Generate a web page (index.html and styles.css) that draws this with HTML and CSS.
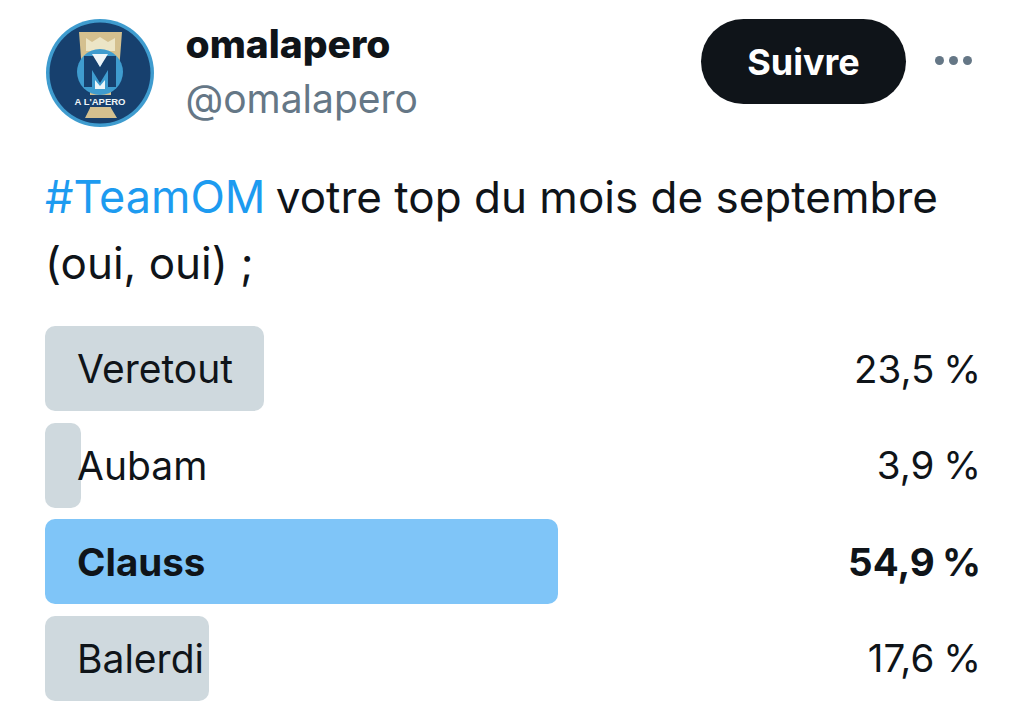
FILE: index.html
```html
<!DOCTYPE html>
<html lang="en">
  <head>
    <title>omalapero</title>
    <meta charset="UTF-8">
    <link rel="stylesheet" href="styles.css">
  </head>
  <body>
    <article class="tweet">
      <header class="tweet-head">
        <svg class="avatar" viewBox="0 0 110 110" aria-hidden="true">
          <circle cx="55" cy="55" r="54" fill="#3f9ccf"/>
          <circle cx="55" cy="55" r="50.5" fill="#17406e"/>
          <path d="M34 14 H77 L75 40 Q73 60 66 74 L66 90 L72 100 H40 L45 90 L45 74 Q37 60 36 40 Z" fill="#d4c08f"/>
          <path d="M41 20 L47 24 L55 19 L63 24 L70 20 V33 H41 Z" fill="#ece5c6"/>
          <circle cx="55" cy="54" r="23" fill="#3f9ccf"/>
          <path d="M39 69 V38 H49 L55 49 L61 38 H71 V69 H63 V52 L55 65 L47 52 V69 Z" fill="#17406e"/>
          <path d="M47 36 H63 L55 49 Z" fill="#eef5f8"/>
          <path d="M50 62 L55 68 L60 62 V71 H50 Z" fill="#eef5f8"/>
          <rect x="25" y="77" width="60" height="12" fill="#17406e"/>
          <text class="avatar-text" x="55" y="87" text-anchor="middle">A L'APERO</text>
        </svg>
        <div class="names">
          <span class="display-name">omalapero</span>
          <span class="handle">@omalapero</span>
        </div>
        <button class="follow-btn">Suivre</button>
        <div class="more-dots">
          <span></span><span></span><span></span>
        </div>
      </header>

      <p class="tweet-text"><span class="hashtag">#TeamOM</span> votre top du mois de septembre<br>(oui, oui) ;</p>

      <div class="poll">
        <div class="poll-row">
          <div class="poll-track">
            <div class="poll-bar" style="width: 23.5%"></div>
            <span class="poll-label">Veretout</span>
          </div>
          <span class="poll-value">23,5 %</span>
        </div>
        <div class="poll-row">
          <div class="poll-track">
            <div class="poll-bar" style="width: 3.9%"></div>
            <span class="poll-label">Aubam</span>
          </div>
          <span class="poll-value">3,9 %</span>
        </div>
        <div class="poll-row winner">
          <div class="poll-track">
            <div class="poll-bar" style="width: 54.9%"></div>
            <span class="poll-label">Clauss</span>
          </div>
          <span class="poll-value">54,9 %</span>
        </div>
        <div class="poll-row">
          <div class="poll-track">
            <div class="poll-bar" style="width: 17.6%"></div>
            <span class="poll-label">Balerdi</span>
          </div>
          <span class="poll-value">17,6 %</span>
        </div>
      </div>
    </article>
  </body>
</html>
```

FILE: styles.css
```css
html {
  font-family: Inter, "Liberation Sans", sans-serif;
}

body {
  margin: 0;
  background-color: white;
  color: #0f1419;
  overflow: hidden;
}

.tweet {
  padding: 19px 45px 0 45px;
}

/* Header */

.tweet-head {
  display: flex;
  align-items: flex-start;
}

.avatar {
  width: 110px;
  height: 110px;
  flex: none;
  margin-top: -1px;
}

.avatar-text {
  font-family: "Liberation Sans", sans-serif;
  font-size: 9.5px;
  font-weight: bold;
  fill: #eef5f8;
}

.names {
  display: flex;
  flex-direction: column;
  margin-left: 30.5px;
  flex: 1;
}

.display-name {
  font-size: 39px;
  line-height: 50px;
  font-weight: 800;
}

.handle {
  font-size: 39px;
  line-height: 59px;
  color: #657786;
}

.follow-btn {
  width: 205px;
  height: 85px;
  margin-right: 29px;
  border: none;
  border-radius: 43px;
  background-color: #0f1419;
  color: white;
  font-family: inherit;
  font-size: 36px;
  font-weight: 700;
}

.more-dots {
  display: flex;
  gap: 5px;
  height: 85px;
  align-items: center;
  margin-right: 7px;
  margin-top: -1px;
}

.more-dots span {
  width: 9px;
  height: 9px;
  border-radius: 50%;
  background-color: #657786;
}

/* Tweet text */

.tweet-text {
  margin: 36px 0 0 0;
  font-size: 44px;
  line-height: 66px;
}

.hashtag {
  color: #1d9bf0;
  font-size: 45px;
  margin-right: -2px;
}

/* Poll */

.poll {
  display: flex;
  flex-direction: column;
  gap: 11.6px;
  margin-top: 30px;
}

.poll-row {
  display: grid;
  grid-template-columns: 1fr;
  align-items: center;
  font-size: 39px;
}

.poll-track {
  display: grid;
  align-items: center;
  grid-area: 1 / 1;
}

.poll-bar {
  grid-area: 1 / 1;
  height: 85px;
  border-radius: 10px;
  background-color: #cfd9de;
}

.poll-label {
  grid-area: 1 / 1;
  z-index: 1;
  padding-left: 32px;
}

.poll-value {
  grid-area: 1 / 1;
  justify-self: end;
  z-index: 1;
  margin-right: -2px;
  font-size: 38.5px;
  word-spacing: -2px;
}

.winner {
  font-weight: 700;
}

.winner .poll-label {
  font-size: 38.5px;
}

.winner .poll-bar {
  background-color: #7fc5f8;
}
```
